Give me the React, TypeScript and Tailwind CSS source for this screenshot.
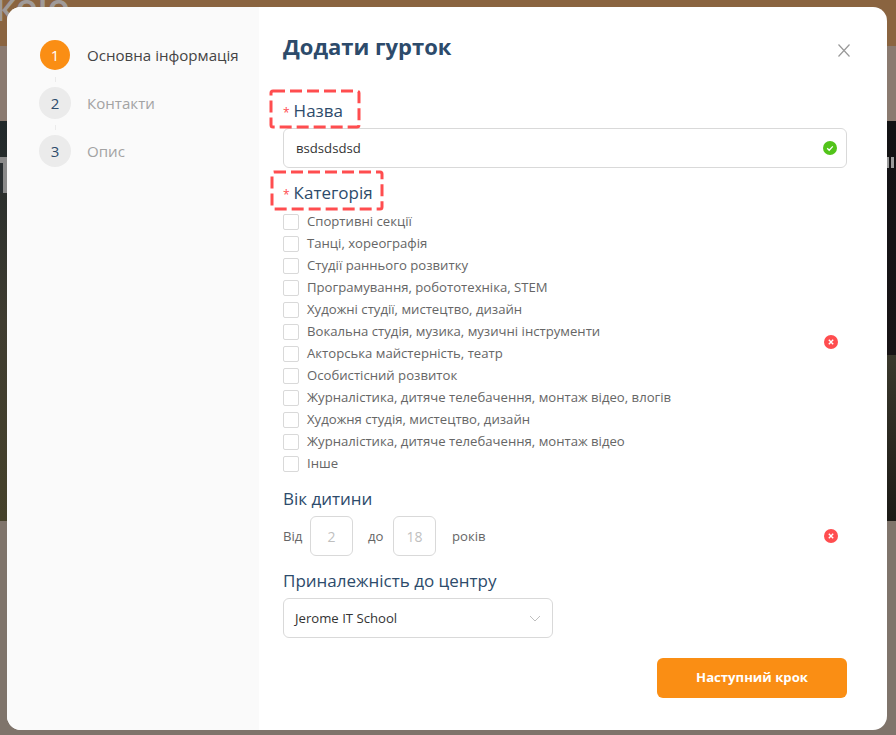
import React from "react";

const categories = [
  "Спортивні секції",
  "Танці, хореографія",
  "Студії раннього розвитку",
  "Програмування, робототехніка, STEM",
  "Художні студії, мистецтво, дизайн",
  "Вокальна студія, музика, музичні інструменти",
  "Акторська майстерність, театр",
  "Особистісний розвиток",
  "Журналістика, дитяче телебачення, монтаж відео, влогів",
  "Художня студія, мистецтво, дизайн",
  "Журналістика, дитяче телебачення, монтаж відео",
  "Інше",
];

function ErrorIcon() {
  return (
    <svg width="14" height="14" viewBox="0 0 14 14" className="block">
      <circle cx="7" cy="7" r="7" fill="#ff4d4f" />
      <path d="M4.8 4.8l4.4 4.4M9.2 4.8l-4.4 4.4" stroke="#fff" strokeWidth="1.4" />
    </svg>
  );
}

function Step({ n, label, active }: { n: number; label: string; active?: boolean }) {
  return (
    <div className="flex items-center h-[32px]">
      <div className={active ? "w-[30px] h-[30px] mx-px rounded-full bg-[#fa8e14] text-white flex items-center justify-center text-[15px]" : "w-[32px] h-[32px] rounded-full bg-[#ebebeb] text-[#2d4b6b] flex items-center justify-center text-[15px]"}>
        {n}
      </div>
      <span className={active ? "ml-[16px] text-[15.1px] text-[#444]" : "ml-[16px] text-[15.1px] text-[#a3a3a3]"}>{label}</span>
    </div>
  );
}

function Connector() {
  return (
    <div className="h-[16px] flex items-center pl-[16px]">
      <div className="w-px h-[5px] bg-[#ebebeb]" />
    </div>
  );
}

function RequiredLabel({ text, rowClass }: { text: string; rowClass: string }) {
  return (
    <div className={`flex items-center ${rowClass}`}>
      <span className="text-[#ff4d4f] text-[12px] mr-[4px] mt-[3px]">*</span>
      <span className="text-[#2d4b6b] text-[17px]">{text}</span>
    </div>
  );
}

function DashedBox({ width, height, className }: { width: number; height: number; className: string }) {
  return (
    <svg className={`absolute ${className}`} width={width + 4} height={height + 4} viewBox={`0 0 ${width + 4} ${height + 4}`}>
      <rect x="2" y="2" width={width} height={height} rx="2" fill="none" stroke="#ff4d4f" strokeWidth="3" strokeDasharray="12 5" />
    </svg>
  );
}

export default function App() {
  return (
    <div className="relative w-[896px] h-[735px] overflow-hidden bg-[#7f746b]" style={{ fontFamily: '"Open Sans", sans-serif' }}>
      <div className="flex flex-col h-[521px]">
        <div className="h-[46px] bg-[#8a6440] text-[#a09a98] text-[37px] font-semibold leading-[14px] -tracking-[0.5px] overflow-hidden">
          <span className="-ml-[5px] block">коіо</span>
        </div>
        <div className="h-[75px] bg-[#8a7a70]" />
        <div className="flex-1 flex justify-between bg-[#141416]">
          <div className="relative w-[7px] bg-gradient-to-b from-[#20282a] via-[#3f3c30] to-[#45412a]">
            <div className="absolute left-0 top-[36px] w-full h-[36px] bg-[#8a8a8a]">
              <div className="mt-[6px] w-[3px] h-[30px] bg-[#2a3032]" />
            </div>
          </div>
          <div className="relative w-[9px] flex flex-col">
            <div className="flex-1 bg-gradient-to-b from-[#121214] to-[#181416]" />
            <div className="h-[166px] bg-gradient-to-b from-[#3a382c] to-[#1c1a16]" />
            <div className="absolute left-0 top-[36px] w-full h-[11px] flex gap-[2px]">
              <div className="w-[2px] bg-[#9a9a9a]" />
              <div className="w-[3px] bg-[#9a9a9a]" />
            </div>
          </div>
        </div>
      </div>
      <div className="absolute left-[7px] top-[7px] w-[880px] h-[723px] bg-white rounded-[14px] overflow-hidden flex">
        <div className="w-[252px] bg-[#fafafa] pt-[32px] pl-[32px] flex flex-col">
          <Step n={1} label="Основна інформація" active />
          <Connector />
          <Step n={2} label="Контакти" />
          <Connector />
          <Step n={3} label="Опис" />
        </div>
        <div className="flex-1 relative pl-[24px] pr-[40px] pt-[23px]">
          <div className="text-[22px] font-bold text-[#2d4b6b] leading-[33px]">Додати гурток</div>
          <svg className="absolute left-[579px] top-[37px]" width="12" height="13" viewBox="0 0 12 13">
            <path d="M0.5 0.5l11 12M11.5 0.5l-11 12" stroke="#999" strokeWidth="1.2" />
          </svg>
          <div className="mt-[28px]">
            <RequiredLabel text="Назва" rowClass="h-[37px] pt-[3px]" />
          </div>
          <div className="h-[40px] border border-[#d9d9d9] rounded-[6px] flex items-center justify-between pl-[12px] pr-[9px] text-[13.15px] text-[#333]">
            <span className="mt-[2px]">вsdsdsdsd</span>
            <svg width="14" height="14" viewBox="0 0 14 14">
              <circle cx="7" cy="7" r="7" fill="#52c41a" />
              <path d="M4.2 7.2l2 2 3.6-3.8" stroke="#fff" strokeWidth="1.3" fill="none" />
            </svg>
          </div>
          <RequiredLabel text="Категорія" rowClass="h-[43px] pt-[7px]" />
          <div className="relative flex flex-col">
            {categories.map((c) => (
              <div key={c} className="flex items-center h-[22px]">
                <div className="w-[16px] h-[16px] border border-[#d9d9d9] rounded-[2px] bg-white" />
                <span className="ml-[8px] text-[13.15px] text-[#666]">{c}</span>
              </div>
            ))}
            <div className="absolute right-[9px] top-[124px]"><ErrorIcon /></div>
          </div>
          <div className="mt-[13px] text-[17px] text-[#2d4b6b] leading-[22px]">Вік дитини</div>
          <div className="relative flex items-center mt-[6px] text-[13.15px] text-[#666]">
            <span className="w-[27px] mt-[1px]">Від</span>
            <div className="w-[43px] h-[40px] border border-[#d9d9d9] rounded-[6px] flex items-center justify-center text-[14px] text-[#bfbfbf]">2</div>
            <span className="w-[40px] pl-[15px] mt-[1px]">до</span>
            <div className="w-[43px] h-[40px] border border-[#d9d9d9] rounded-[6px] flex items-center justify-center text-[14px] text-[#bfbfbf]">18</div>
            <span className="ml-[16px] mt-[1px]">років</span>
            <div className="absolute right-[9px] top-[13px]"><ErrorIcon /></div>
          </div>
          <div className="mt-[14px] text-[17px] text-[#2d4b6b] leading-[22px]">Приналежність до центру</div>
          <div className="mt-[6px] w-[270px] h-[40px] border border-[#d9d9d9] rounded-[6px] flex items-center justify-between pl-[11px] pr-[11px] text-[13.15px] text-[#333]">
            <span className="mt-[2px]">Jerome IT School</span>
            <svg width="12" height="7" viewBox="0 0 12 7"><path d="M1 1l5 5 5-5" stroke="#bfbfbf" strokeWidth="1" fill="none" /></svg>
          </div>
          <div className="flex justify-end mt-[20px]">
            <div className="w-[190px] h-[40px] rounded-[6px] bg-[#fa8e14] text-white font-bold text-[13.15px] flex items-center justify-center">Наступний крок</div>
          </div>
          <DashedBox width={88} height={36} className="left-[9.5px] top-[82px]" />
          <DashedBox width={110} height={37} className="left-[10.5px] top-[163px]" />
        </div>
      </div>
    </div>
  );
}
